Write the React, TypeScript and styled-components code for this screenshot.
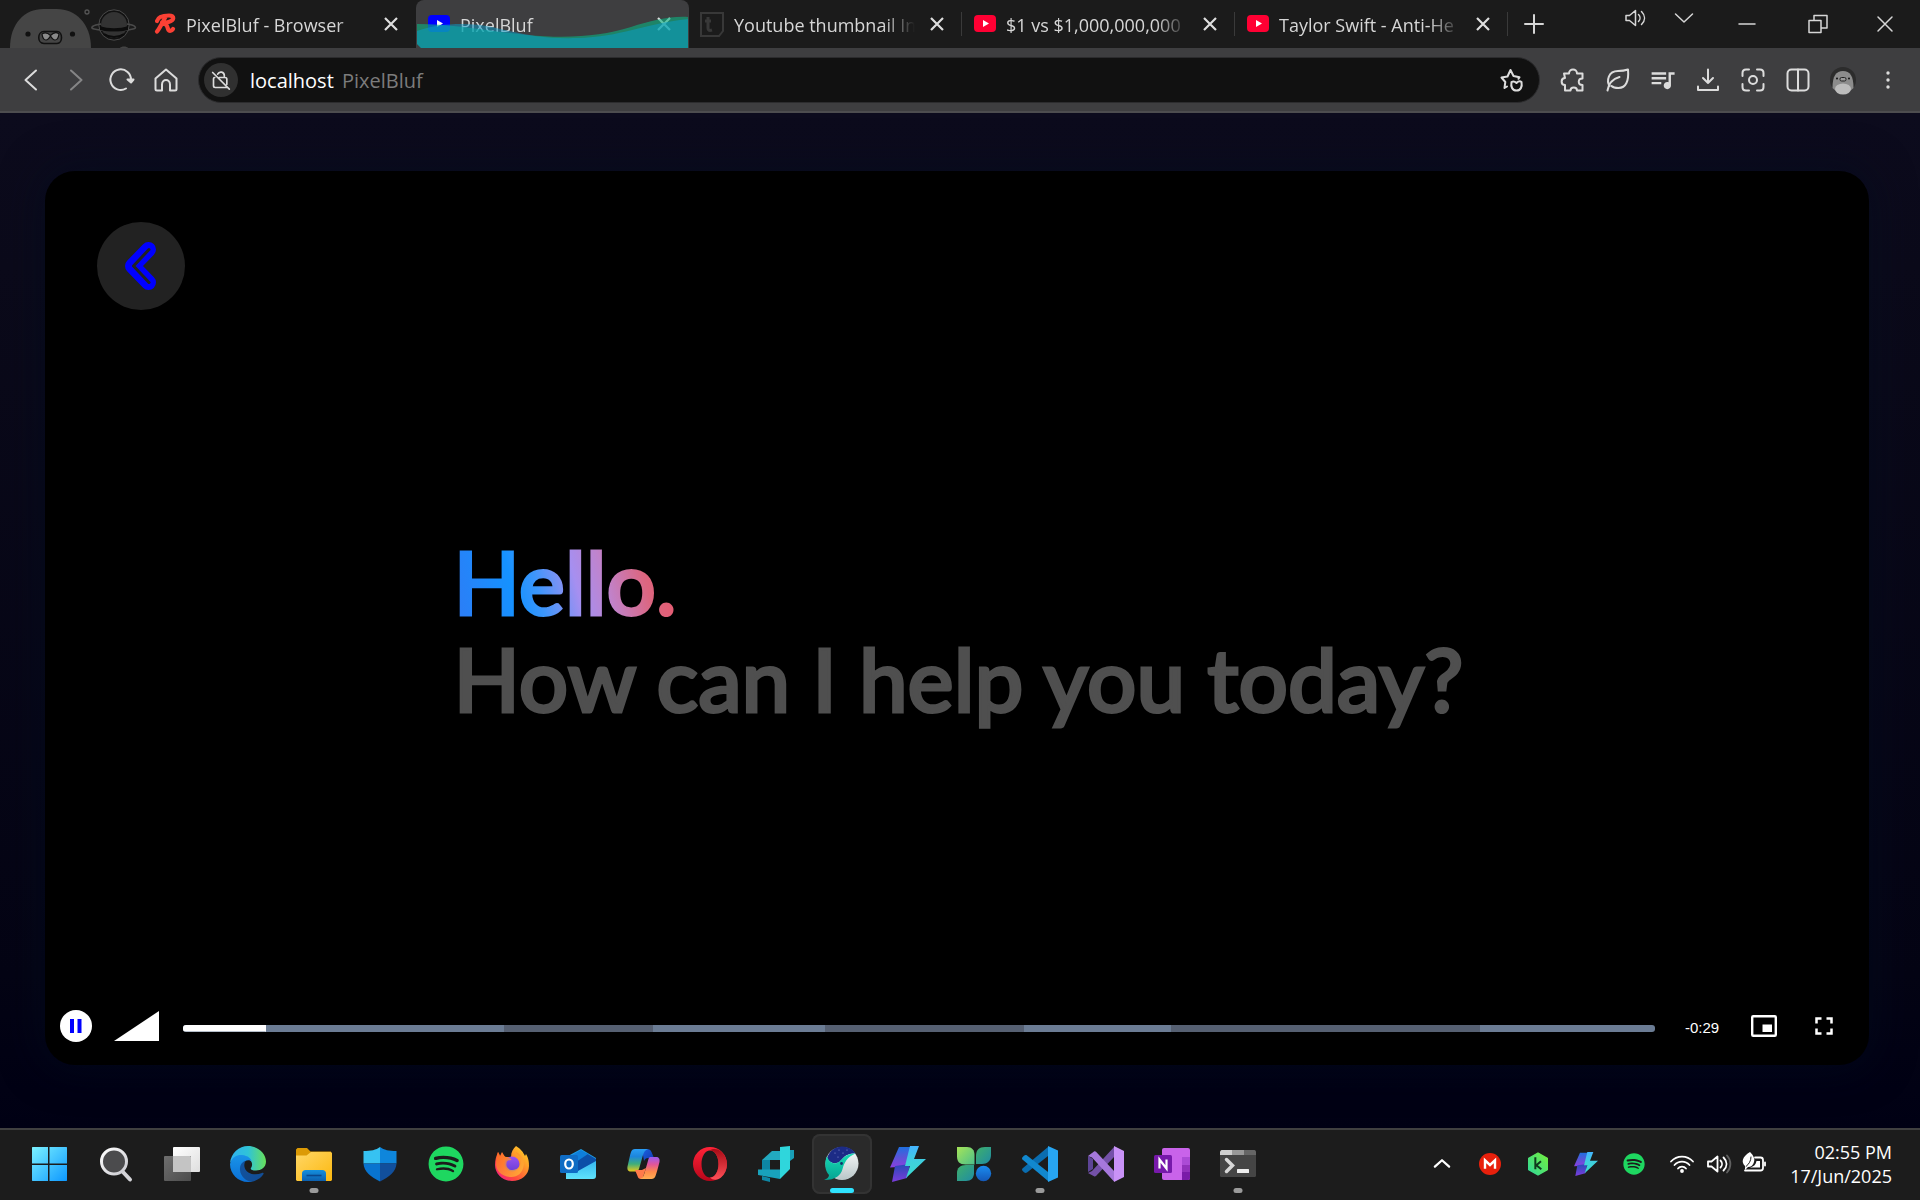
import React from "react";
import styled, { createGlobalStyle, css } from "styled-components";
import { FaSpotify } from "react-icons/fa";
import { MdQueueMusic, MdFullscreen } from "react-icons/md";

const uiFont = `"Open Sans", "Noto Sans", sans-serif`;

const Global = createGlobalStyle`
  * { box-sizing: border-box; }
  body { margin: 0; background: #1b1b1b; font-family: ${uiFont}; }
  button, input { font: inherit; color: inherit; border: 0; padding: 0; margin: 0; background: none; outline: none; }
  button { cursor: pointer; display: flex; align-items: center; justify-content: center; }
  svg { display: block; flex: none; overflow: visible; }
`;

const Desktop = styled.div`
  display: flex;
  flex-direction: column;
  min-height: 100vh;
`;

/* ---------- tab strip ---------- */

const TabStrip = styled.header`
  display: flex;
  align-items: stretch;
  height: 48px;
  background: #1b1b1b;
  color: #d6d6d6;
`;

const Tabs = styled.div`
  display: flex;
  flex: 0 1 1365px;
  min-width: 0;
`;

const Tab = styled.div<{ $active?: boolean; $divider?: boolean }>`
  position: relative;
  flex: 1 1 0;
  min-width: 0;
  display: flex;
  align-items: center;
  gap: 10px;
  padding: 0 13px 0 11px;
  font-size: 18px;
  line-height: 24px;
  ${(p) =>
    p.$active &&
    css`
      background: #3e3e40;
      border-radius: 8px 8px 0 0;
      overflow: hidden;
    `}
  ${(p) =>
    p.$divider &&
    css`
      &::after {
        content: "";
        position: absolute;
        right: 0;
        top: 12px;
        width: 1px;
        height: 24px;
        background: #3a3a3a;
      }
    `}
`;

const TabTitle = styled.span`
  flex: 1;
  min-width: 0;
  padding-top: 2px;
  white-space: nowrap;
  overflow: hidden;
  mask-image: linear-gradient(to right, #000 calc(100% - 32px), transparent);
`;

const CloseTab = styled.button`
  width: 24px;
  height: 24px;
`;

const Wave = styled.svg`
  position: absolute;
  inset: 0;
  width: 100%;
  height: 100%;
  pointer-events: none;
`;

const NewTab = styled.button`
  width: 52px;
`;

const WindowControls = styled.div`
  display: flex;
  margin-left: auto;
`;

const WindowButton = styled.button<{ $w: number; $short?: boolean }>`
  width: ${(p) => p.$w}px;
  height: ${(p) => (p.$short ? 36 : 48)}px;
`;

/* ---------- toolbar ---------- */

const Toolbar = styled.nav`
  display: flex;
  align-items: center;
  height: 65px;
  padding: 0 10px 0 8px;
  background: #3e3e40;
  border-bottom: 2px solid #4d4d4f;
  color: #dcdcdc;
`;

const ToolButton = styled.button<{ $dim?: boolean }>`
  width: 45px;
  height: 45px;
  opacity: ${(p) => (p.$dim ? 0.45 : 1)};
`;

const AddressBar = styled.form`
  display: flex;
  align-items: center;
  flex: 1;
  min-width: 0;
  height: 46px;
  margin: 0 10px;
  padding: 0 15px 0 5px;
  border: 1px solid #2c2c2e;
  border-radius: 23px;
  background: #111;
  font-size: 20px;
`;

const SiteInfo = styled.button`
  width: 34px;
  height: 34px;
  margin-right: 12px;
  border-radius: 50%;
  background: #303030;
`;

const UrlInput = styled.input`
  width: 92px;
  height: 40px;
  padding-top: 2px;
  color: #fff;
`;

const PageTitle = styled.span`
  flex: 1;
  padding-top: 2px;
  color: #7c7c7c;
`;

/* ---------- page ---------- */

const Page = styled.main`
  display: flex;
  flex: 1;
  padding: 58px 51px 63px 45px;
  background: linear-gradient(#0c0b1d, #0b0a1a 15%, #040414 85%, #000014);
`;

const Player = styled.section`
  display: flex;
  flex-direction: column;
  flex: 1;
  min-width: 0;
  padding: 51px 32px 19px 15px;
  border-radius: 30px;
  background: #000;
  box-shadow: 0 0 40px 4px rgba(0, 12, 32, 0.5);
`;

const BackButton = styled.button`
  width: 88px;
  height: 88px;
  margin-left: 37px;
  border-radius: 50%;
  background: #222;
`;

const Frame = styled.div`
  flex: 1;
  display: flex;
  align-items: center;
  justify-content: center;
  padding: 0 0 56px 20px;
`;

const Greeting = styled.h1`
  margin: 0;
  font: 500 87px/97px Lato, "Open Sans", sans-serif;
  color: #4f4f4f;
  -webkit-text-stroke: 3px #4f4f4f;
`;

const Hello = styled.span`
  display: table;
  background: linear-gradient(75deg, #2f7bf5 0%, #1592ff 28%, #3c96fb 38%, #a68ff0 54%, #c083cc 66%, #dc6680 82%, #ee5366 100%);
  background-clip: text;
  color: transparent;
  -webkit-text-stroke-color: transparent;
`;

const Controls = styled.div`
  display: flex;
  align-items: center;
  height: 40px;
  color: #fff;
`;

const PauseButton = styled.button`
  width: 32px;
  height: 32px;
  border-radius: 50%;
  background: #fff;
`;

const Volume = styled.input`
  appearance: none;
  width: 45px;
  height: 30px;
  margin: 0 24px 0 22px;
  background: #fff;
  clip-path: polygon(0 100%, 100% 0, 100% 100%);
  &::-webkit-slider-thumb {
    appearance: none;
    width: 0;
  }
`;

const Seek = styled.input`
  appearance: none;
  flex: 1;
  min-width: 0;
  height: 7px;
  margin-top: 4px;
  border-radius: 3px;
  background: linear-gradient(
    to right,
    #6b7c94 0 21.8%,
    #566072 21.8% 31.9%,
    #6b7c94 31.9% 43.6%,
    #566072 43.6% 57.1%,
    #6b7c94 57.1% 67.1%,
    #566072 67.1% 88.1%,
    #6b7c94 88.1%
  );
  overflow: hidden;
  &::-webkit-slider-thumb {
    appearance: none;
    width: 1px;
    height: 7px;
    border-radius: 0 3px 3px 0;
    background: #fff;
    box-shadow: -500px 0 0 500px #fff;
    clip-path: inset(0 0 0 -1000px);
  }
`;

const Remaining = styled.time`
  width: 34px;
  margin: 4px 32px 0 30px;
  font: 15px/18px "Liberation Sans", Arial, sans-serif;
`;

const PlayerButton = styled.button`
  width: 26px;
  height: 30px;
  & + & {
    margin-left: 34px;
  }
`;

/* ---------- taskbar ---------- */

const Taskbar = styled.footer`
  display: flex;
  align-items: center;
  justify-content: space-between;
  height: 72px;
  padding: 0 28px 2px 17px;
  border-top: 2px solid #404040;
  background: #1c1c1c;
  color: #fff;
`;

const Apps = styled.div`
  display: flex;
`;

const AppButton = styled.button<{ $state?: "open" | "active" }>`
  position: relative;
  width: 60px;
  height: 60px;
  margin: 0 3px;
  border-radius: 8px;
  ${(p) =>
    p.$state === "active" &&
    css`
      background: #2a2a2a;
      box-shadow: inset 0 0 0 2px #333;
    `}
  ${(p) =>
    p.$state &&
    css`
      &::after {
        content: "";
        position: absolute;
        bottom: 1px;
        left: 50%;
        width: ${p.$state === "active" ? 24 : 9}px;
        height: 5px;
        border-radius: 3px;
        background: ${p.$state === "active" ? "#2fe3ff" : "#9a9a9a"};
        transform: translateX(-50%);
      }
    `}
`;

const Tray = styled.div`
  display: flex;
  align-items: center;
`;

const TrayButton = styled.button<{ $w?: number }>`
  width: ${(p) => p.$w ?? 48}px;
  height: 48px;
`;

const Clock = styled.time`
  margin-left: 12px;
  font-size: 18px;
  line-height: 24px;
  text-align: right;
`;

/* ---------- drawings ---------- */

const Grad = ({ id, c, v, r }: { id: string; c: string[]; v?: boolean; r?: boolean }) => (
  <linearGradient id={id} x1={r ? 1 : 0} y1="0" x2={v || r ? 0 : 1} y2="1">
    {c.map((color, i) => (
      <stop key={i} offset={i / (c.length - 1)} stopColor={color} />
    ))}
  </linearGradient>
);

const Art = ({ children, size = 36 }: { children: React.ReactNode; size?: number }) => (
  <svg width={size} height={size} viewBox="0 0 36 36" aria-hidden="true">
    {children}
  </svg>
);

const Line = ({ d, size = 24, w = 2, children }: { d?: string; size?: number; w?: number; children?: React.ReactNode }) => (
  <svg width={size} height={size} viewBox="0 0 24 24" fill="none" stroke="currentColor" strokeWidth={w} strokeLinecap="round" strokeLinejoin="round" aria-hidden="true">
    {d && <path d={d} />}
    {children}
  </svg>
);

const Mascots = () => (
  <svg width="143" height="48" viewBox="0 0 143 48" aria-hidden="true">
    <path d="M10 48C10 23 25 9 43 9h14c18 0 34 14 34 39z" fill="#454545" />
    <circle cx="28" cy="34" r="2.6" fill="#111" />
    <circle cx="72.5" cy="34" r="2.6" fill="#111" />
    <path d="M44 31.500h13c6 0 6 12 0 12H44c-7 0-7-12 0-12z" fill="#454545" stroke="#111" strokeWidth="1.6" />
    <path d="M42 34c3-2 6-1 8.500 1.500 2.500-2.500 6-3.500 8.500-1.500-.5 4-2 6-4 6s-3-1.500-4.500-4C49 38.500 48 40 46 40s-3.500-2-4-6z" fill="#8a8a8a" stroke="#111" strokeWidth="1.2" />
    <circle cx="114" cy="25" r="14" fill="#333" stroke="#111" strokeWidth="2" />
    <circle cx="114" cy="25" r="15.2" fill="none" stroke="#4a4a4a" />
    <path d="M101 24c-8 1-12 4-7 5 10 2 30 2 39 0 5-1 2-4-6-5" fill="none" stroke="#4a4a4a" strokeWidth="1.6" />
    <path d="M100 26c8 3 20 3 28 0v4c-8 2-20 2-28 0z" fill="#0c0c0c" />
    <path d="M104 34c6 4 14 4 20 0" fill="none" stroke="#0c0c0c" strokeWidth="2" />
    <circle cx="87" cy="12" r="2" fill="none" stroke="#555" strokeWidth="1.3" />
    <path d="M120 48c1-2 7-2 8 0z" fill="#444" />
  </svg>
);

const Cross = () => (
  <svg width="14" height="14" viewBox="0 0 14 14" stroke="#dedede" strokeWidth="2.2" aria-hidden="true">
    <path d="M1 1l12 12M13 1L1 13" />
  </svg>
);

const RMark = () => (
  <svg width="22" height="22" viewBox="0 0 22 22" fill="none" stroke="#fb4034" strokeWidth="4.2" strokeLinecap="round" strokeLinejoin="round" aria-hidden="true">
    <path d="M3 8C4 4 9 2.500 15 2.500c6 0 5.500 5-.5 6.500-2 .6-5 .8-6.500.5M11.500 4C8.500 9 6.500 14 3 18.500M10 11c4 0 3 4 4.500 6 1 1.500 3 1 4.500-1" />
  </svg>
);

const PlayBadge = ({ color }: { color: string }) => (
  <svg width="23" height="18" viewBox="0 0 23 18" aria-hidden="true">
    <rect x="1" y="0" width="22" height="17" rx="4" fill={color} />
    <path d="M10 5l6 3.500-6 3.500z" fill="#fff" />
  </svg>
);

const TMark = () => (
  <svg width="24" height="25" viewBox="0 0 24 25" fill="none" stroke="#383838" strokeWidth="2" aria-hidden="true">
    <path d="M1 1h22v18l-4 5H1z" />
    <path d="M8 5v11c0 2 1 3 4 2M5 9h6" strokeWidth="3" />
  </svg>
);

const Speaker = ({ size = 24, tray }: { size?: number; tray?: boolean }) => (
  <Line size={size} w={tray ? 1.8 : 1.5}>
    <path d="M2 9.500h3.500L11.500 4.500v15l-6-5H2z" />
    <path d="M14.500 8.500c2 2 2 5 0 7M17.500 5.500c4 4 4 9 0 13" />
    {tray && <path d="M21 3.500c4.500 5 4.500 12 0 17" opacity=".3" />}
  </Line>
);

const Bolt = ({ id, size = 36 }: { id: string; size?: number }) => (
  <Art size={size}>
    <defs>
      <Grad id={id + "a"} c={["#1f6fe0", "#5a55d8", "#8a3fe0"]} v />
      <Grad id={id + "b"} c={["#45b4ff", "#3fd0dc", "#3adbd0"]} v />
      <Grad id={id + "c"} c={["#2848b8", "#7b3ddc"]} v />
    </defs>
    <path d="M9 1h13l-7 19.500-15 1z" fill={`url(#${id}a)`} />
    <path d="M5 20l15-2-3 14-15 4z" fill={`url(#${id}c)`} />
    <path d="M20 0h9l-5 13h12L16 32l4-12h-5z" fill={`url(#${id}b)`} />
  </Art>
);

const Start = () => (
  <Art>
    <defs>
      <linearGradient id="win" x1="0" y1="0" x2="36" y2="36" gradientUnits="userSpaceOnUse">
        <stop offset="0" stopColor="#7df3ff" />
        <stop offset="1" stopColor="#0a95ff" />
      </linearGradient>
    </defs>
    <path d="M.5 1H16v16.500H0V1.500zM17.500 1h17l.5.5v16H17.500zM0 19h16v16H.5L0 34.500zM17.500 19H35v15.500l-.5.5h-17z" fill="url(#win)" />
  </Art>
);

const Search = () => (
  <Art>
    <defs>
      <Grad id="sr" c={["#fff", "#c9c9cf"]} />
    </defs>
    <path d="M24.500 25.500l7.500 8" stroke="#d4d4d8" strokeWidth="4" strokeLinecap="round" />
    <circle cx="16" cy="15.5" r="12.5" fill="#4b4b4d" stroke="url(#sr)" strokeWidth="3" />
  </Art>
);

const TaskView = () => (
  <Art>
    <defs>
      <Grad id="tv1" c={["#fff", "#dedede"]} />
      <Grad id="tv2" c={["#6e6e6e", "#4c4c4c"]} />
    </defs>
    <rect x="9" y="1" width="27" height="25" rx="1" fill="url(#tv1)" />
    <rect x="0" y="10" width="27" height="25" rx="1" fill="url(#tv2)" />
    <path d="M9 10h17l1 1v15H9z" fill="#c4c4c4" />
  </Art>
);

const Edge = () => (
  <Art>
    <defs>
      <linearGradient id="ed1">
        <stop offset="0" stopColor="#2fb2f0" />
        <stop offset=".5" stopColor="#2fc3d8" />
        <stop offset="1" stopColor="#68e05a" />
      </linearGradient>
      <Grad id="ed2" c={["#1a94e8", "#0a6fd6"]} v />
      <Grad id="ed3" c={["#12539f", "#124c94"]} />
    </defs>
    <path d="M0 17C1 7 9 0 18 0s18 7 18 15.500c0 6-5 9-10 9-4 0-6-1-5-2.500 2-3 1-6-1-8-4-5-14-6-20 3z" fill="url(#ed1)" />
    <path d="M0 18C2 10 8 8.500 12 9c6 .5 9.500 4 9.500 6.500C19 13 14 14 12.500 19c-2 7 3.500 15 11.500 15.500-2 1-4 1.500-6 1.500C8 36 0 28 0 18z" fill="url(#ed2)" />
    <path d="M15.500 14.500c-4 2-6 5-5.500 9.500C10.500 31 17 36 23 35.500c5-1.500 8.500-4 10.500-7.500.5-1-.5-1.500-1.500-1-7 3-16 1-17.500-6-.5-2.500 0-4.500 1-6.500z" fill="url(#ed3)" />
  </Art>
);

const Folder = () => (
  <Art>
    <defs>
      <Grad id="fo" c={["#ffd766", "#fcb80f"]} />
      <Grad id="fb" c={["#1490df", "#0c5fae"]} v />
    </defs>
    <path d="M1.500 2H11l3.500 3.500H35V20H0V3.500z" fill="#dc9a05" />
    <path d="M0 9.500h10.500L15 6h20l1 1v27l-1 1H1l-1-1z" fill="url(#fo)" />
    <path d="M6 35v-7.500c0-2 1.500-3.500 3.500-3.500h17c2 0 3.500 1.500 3.500 3.500V35z" fill="url(#fb)" />
    <path d="M10.500 29.500h15" stroke="#0a478c" strokeWidth="1.6" />
  </Art>
);

const Shield = () => (
  <Art>
    <path d="M18 1C14 4 9 5 1.500 5v12.500H18z" fill="#36c2f2" />
    <path d="M18 1c4 3 9 4 16.500 4v12.500H18z" fill="#0e86dc" />
    <path d="M1.500 17.500C2 26 9 31 18 35.500v-18z" fill="#0874cf" />
    <path d="M34.500 17.500C34 26 27 31 18 35.500v-18z" fill="#114f9c" />
  </Art>
);

const Firefox = () => (
  <Art>
    <defs>
      <Grad id="ff1" r c={["#ffe226", "#ff9a2a", "#ff4a3c", "#f0129a"]} />
      <Grad id="ff2" c={["#9a52f0", "#6a3fd6"]} v />
      <Grad id="ff3" c={["#ff6a22", "#ffc23a"]} />
    </defs>
    <path d="M22 0c5 3 7 6 9 10l1-2c3 5 3 9 3 12 0 9-8 15-17 15S1 28 1 19c0-5 1-8 3-13l2 4 2-4 3 5h6c0-5 2-8 5-11z" fill="url(#ff1)" />
    <circle cx="18" cy="18" r="7.5" fill="url(#ff2)" />
    <path d="M4 6c1 1 2 3 2 5l2-4c1 2 3 4 5 4 2 .5 4 1.500 4.500 3-3 0-5 1-5 3-1 4 2 7 6 7 5 0 9-4 8-10-1-4-4-6-5-8 6 2 9 8 8 14-1 7-6 11-12 11C8 31 2 25 2 18 2 13 3 9 4 6z" fill="url(#ff3)" opacity=".75" />
  </Art>
);

const Outlook = () => (
  <Art>
    <defs>
      <Grad id="ol" c={["#36b8f0", "#5fe2fb"]} v />
    </defs>
    <path d="M6 11L21 3l15 9v16H6z" fill="#1f9fe6" />
    <path d="M14 14l12-7 10 6v4L17 27z" fill="#0c4fa8" />
    <path d="M12 9l9-5 7 4-12 8z" fill="#0f7fdb" />
    <path d="M6 33V24l12 1 18-10v15c0 2-1 3-3 3z" fill="url(#ol)" />
    <rect x="0" y="9" width="18" height="18" rx="1.5" fill="#0f6cc4" />
    <ellipse cx="9" cy="18" rx="3.8" ry="4.5" fill="none" stroke="#fff" strokeWidth="2.2" />
  </Art>
);

const Copilot = () => (
  <Art>
    <defs>
      <Grad id="cp1" v c={["#2a9df4", "#1c86dc", "#3fae7a", "#e8c81c"]} />
      <Grad id="cp2" v c={["#9a5cf0", "#e0559a", "#ff8a4a", "#ffae52"]} />
      <Grad id="cp3" c={["#1a62e0", "#1238b0"]} />
    </defs>
    <path d="M16 3h5c2 0 4 1 4.500 3L28 12h-6c-2 0-3 1-4 3z" fill="url(#cp3)" />
    <path d="M9 3h13c-3 1-4 3-5 6l-4 14c-1 2-2 2.500-4 2.500H5c-3 0-4-2-3.500-5C3 14 4 9 5 6c.7-2 2-3 4-3z" fill="url(#cp1)" />
    <path d="M9 24h7l4-2-3 9c-.5 1.500-1 2-2 2-2 0-3-1-3.500-3z" fill="#ff7a4a" />
    <path d="M25 11h5c3 0 4 2 3.500 5-1.500 6-3 11-4 14-.7 2-2 3-4 3H14c3-1 3.500-3 4.500-6l4-14c.5-1.500 1-2 2.500-2z" fill="url(#cp2)" />
  </Art>
);

const Opera = () => (
  <Art>
    <defs>
      <Grad id="op1" v c={["#ff2338", "#b8061a"]} />
      <Grad id="op2" v c={["#a80c16", "#ff5058"]} />
    </defs>
    <path fillRule="evenodd" d="M18 1a17 17 0 100 34 17 17 0 000-34zm0 3.500c5 0 8.500 6 8.500 13.500S23 31.500 18 31.500 9.500 25.500 9.500 18 13 4.500 18 4.500z" fill="url(#op1)" />
    <path d="M18 4.500c3-2 7-2 11 1 8 7 8 19 0 26-4 3-8 3-11 0 5 0 8.500-6 8.500-13.500S23 4.500 18 4.500z" fill="url(#op2)" />
  </Art>
);

const DevEditor = () => (
  <Art>
    <path d="M4 30l8 2v4l-8-2z" fill="#0e87a5" />
    <path d="M4 14h8v10H4z" fill="#0d86a4" />
    <path d="M4 14l10-9h8v9z" fill="#22a9bf" />
    <path d="M0 23.500h22V33L0 29z" fill="#18a2bc" />
    <path d="M22 1l10-1v23L22 33z" fill="#2fd6dc" />
    <path d="M32 4h4v8l-4 3z" fill="#199fb8" />
  </Art>
);

const Whale = () => (
  <Art>
    <defs>
      <Grad id="wh" v c={["#fff", "#b9c6c8"]} />
      <Grad id="wt" v c={["#18dcb4", "#04a393"]} />
    </defs>
    <circle cx="18" cy="17.5" r="16.5" fill="url(#wh)" />
    <path d="M3 12C6 4 12 .5 18 .5c6 0 11 3 13.500 7-9-1-13 5-16 8.500C12 18 6 18 3 12z" fill="#1c2b86" />
    <path d="M3 10c2 8 9 9 13 5 4-4 8-8 15.500-7.500C23 11 20 17 18.500 23 17 29 12 34 0 34c3-1 5-3 5-5C1 25 0 17 3 10z" fill="url(#wt)" />
    <circle cx="17.5" cy="17.500" r="1.400" fill="#14306a" />
    <g fill="#8d97d8">
      <circle cx="11" cy="7" r=".6" />
      <circle cx="15" cy="4" r=".6" />
      <circle cx="19" cy="7" r=".6" />
      <circle cx="14" cy="11" r=".6" />
      <circle cx="23" cy="4" r=".6" />
    </g>
  </Art>
);

const Clover = () => (
  <Art>
    <defs>
      <Grad id="cl1" c={["#a6e458", "#4cc08a"]} />
      <Grad id="cl2" c={["#3fb06a", "#1f8ca4"]} />
      <Grad id="cl3" c={["#1a8cf0", "#1458b8"]} v />
    </defs>
    <path d="M35 1v8c0 6-4 9-9 9h-6V10c0-6 3-9 9-9z" fill="url(#cl2)" />
    <path d="M1 35v-8c0-5 3-8 9-8h8v8c0 5-3 8-8 8z" fill="url(#cl2)" />
    <path d="M1 1h10c5 0 7.500 3 7.500 8v9.500h-9c-6 0-8.500-3-8.500-8z" fill="url(#cl1)" />
    <circle cx="27.5" cy="27.5" r="7.7" fill="url(#cl3)" />
  </Art>
);

const Code = () => (
  <Art>
    <path d="M26 1v9L5 26.500c-1 .7-2 .6-3-.2l-1.300-1.300c-.9-1-.9-2 0-2.800z" fill="#0a6db0" />
    <path d="M26 35v-9L5 9.500c-1-.7-2-.6-3 .2L.7 11c-.9 1-.9 2 0 2.800z" fill="#1188cf" />
    <path d="M26 0l10 4.500v27L26 36z" fill="#27a5f2" />
  </Art>
);

const VisualStudio = () => (
  <Art>
    <path d="M0 10l5 3v10l-5 3z" fill="#5d4496" />
    <path d="M26 1v10L8 30c-.7.5-1.200.5-2 .2L0 27l4-2z" fill="#7451a8" />
    <path d="M0 10l6-4.500c.8-.5 1.500-.3 2 .2L26 25v10.500L4 11.500z" fill="#a678dc" />
    <path d="M26 0l10 5v26l-10 5z" fill="#c992f7" />
  </Art>
);

const OneNote = () => (
  <Art>
    <rect x="8" y="2" width="28" height="32" rx="2" fill="#c963ea" />
    <path d="M28 11h8v8h-8z" fill="#ac4bd6" />
    <path d="M28 19h8v7h-8z" fill="#9231bb" />
    <path d="M28 26h8v6c0 1-1 2-2 2h-6z" fill="#7a1ba8" />
    <rect x="0" y="9" width="18" height="18" rx="1.5" fill="#7719aa" />
    <path d="M5.500 22.500v-9l7 9v-9" fill="none" stroke="#fff" strokeWidth="2.2" />
  </Art>
);

const Terminal = () => (
  <Art>
    <rect x="0" y="4" width="36" height="27" rx="1.5" fill="#454545" />
    <path d="M1.500 4H12v5H0V5.500z" fill="#cfcfcf" />
    <path d="M12 4h12v5H12z" fill="#999" />
    <path d="M24 4h10.500L36 5.500V9H24z" fill="#666" />
    <path d="M6.500 13.500l6 6-6 6" fill="none" stroke="#d8d8d8" strokeWidth="3.5" strokeLinecap="round" />
    <rect x="17" y="23" width="12" height="4" rx=".5" fill="#ededed" />
  </Art>
);

const Mega = () => (
  <Art size={24}>
    <circle cx="18" cy="18" r="16.5" fill="#e8200c" />
    <path d="M10.500 25V12.500l7.500 7 7.500-7V25" fill="none" stroke="#fff" strokeWidth="3.6" />
  </Art>
);

const Kite = () => (
  <Art size={24}>
    <defs>
      <Grad id="kk" r c={["#74f03c", "#2fd79a"]} />
    </defs>
    <path d="M18 1.500l14 8v17l-14 8-14-8v-17z" fill="url(#kk)" stroke="url(#kk)" strokeWidth="2" strokeLinejoin="round" />
    <path d="M14 8v18M22.500 14L15.500 20l7.500 6" fill="none" stroke="#0f3a1c" strokeWidth="3" />
  </Art>
);

const Wifi = () => (
  <Line d="M1 9.500c6-6.500 16-6.500 22 0M4.500 13c4-4.500 11-4.500 15 0M8 16.500c2-2.500 6-2.500 8 0" w={1.8}>
    <circle cx="12" cy="19" r="1" fill="currentColor" />
  </Line>
);

const Battery = () => (
  <Line w={1.8}>
    <path d="M13 5.500h5.500c1.500 0 2.500 1 2.500 2.500v8c0 1.500-1 2.500-2.500 2.500H3M23 10.500v3" />
    <path d="M8 0c4 4 5 7 4 10-.7 3-3 5-6 5l-3 3v-4C-1 10 0 5 8 0z" fill="currentColor" stroke="none" />
    <path d="M14.500 9h3.500v6.500H8c4-1 6-3 6.500-6.500z" fill="currentColor" stroke="none" />
    <path d="M9 5c0 4-2 7-5 9.500" stroke="#1c1c1c" strokeWidth="1" />
  </Line>
);

/* ---------- data ---------- */

const tabs = [
  { title: "PixelBluf - Browser", icon: <RMark /> },
  { title: "PixelBluf", icon: <PlayBadge color="#0000ff" />, active: true },
  { title: "Youtube thumbnail In", icon: <TMark />, divider: true },
  { title: "$1 vs $1,000,000,000", icon: <PlayBadge color="#ff0033" />, divider: true },
  { title: "Taylor Swift - Anti-He", icon: <PlayBadge color="#ff0033" />, divider: true },
];

const apps: { name: string; icon: React.ReactNode; state?: "open" | "active" }[] = [
  { name: "Start", icon: <Start /> },
  { name: "Search", icon: <Search /> },
  { name: "Task view", icon: <TaskView /> },
  { name: "Edge", icon: <Edge /> },
  { name: "File Explorer", icon: <Folder />, state: "open" },
  { name: "Windows Security", icon: <Shield /> },
  { name: "Spotify", icon: <FaSpotify size={36} color="#1ed760" /> },
  { name: "Firefox", icon: <Firefox /> },
  { name: "Outlook", icon: <Outlook /> },
  { name: "Copilot", icon: <Copilot /> },
  { name: "Opera", icon: <Opera /> },
  { name: "Dev editor", icon: <DevEditor /> },
  { name: "Whale", icon: <Whale />, state: "active" },
  { name: "Bolt", icon: <Bolt id="bt" /> },
  { name: "Clover", icon: <Clover /> },
  { name: "Visual Studio Code", icon: <Code />, state: "open" },
  { name: "Visual Studio", icon: <VisualStudio /> },
  { name: "OneNote", icon: <OneNote /> },
  { name: "Terminal", icon: <Terminal />, state: "open" },
];

export default function App() {
  return (
    <Desktop>
      <Global />
      <TabStrip>
        <Mascots />
        <Tabs role="tablist">
          {tabs.map((t) => (
            <Tab key={t.title} role="tab" aria-selected={!!t.active} $active={t.active} $divider={t.divider}>
              {t.icon}
              <TabTitle>{t.title}</TabTitle>
              <CloseTab aria-label={`Close ${t.title}`}>
                <Cross />
              </CloseTab>
              {t.active && (
                <Wave viewBox="0 0 273 48" preserveAspectRatio="none" aria-hidden="true">
                  <path d="M1 24c35 0 65 6 109 11 45 4 75 1 105-8 20-6 38-11 57-10v31H5L1 44z" fill="rgb(10 180 130 / .6)" />
                  <path d="M1 31c25-9 55-8 75-4 30 7 50 12 85 11 45-1 65-14 111-19v29H5L1 44z" fill="rgb(8 158 206 / .5)" />
                </Wave>
              )}
            </Tab>
          ))}
        </Tabs>
        <NewTab aria-label="New tab">
          <Line d="M12 3v18M3 12h18" w={2} />
        </NewTab>
        <WindowControls>
          <WindowButton $w={48} $short aria-label="Mute tab"><Speaker /></WindowButton>
          <WindowButton $w={48} $short aria-label="Search tabs"><Line d="M3.500 8L12 16l8.500-8" w={1.5} /></WindowButton>
          <WindowButton $w={78} aria-label="Minimize"><Line d="M4 12h16" w={1.5} /></WindowButton>
          <WindowButton $w={64} aria-label="Restore"><Line d="M3 8.500h12v12H3zM8 8V3.500h13V16h-5" w={1.5} /></WindowButton>
          <WindowButton $w={70} aria-label="Close window"><Line d="M5 5l14 14M19 5L5 19" w={1.5} /></WindowButton>
        </WindowControls>
      </TabStrip>

      <Toolbar>
        <ToolButton aria-label="Back"><Line d="M17 2.500L6.500 12 17 21.500" /></ToolButton>
        <ToolButton $dim aria-label="Forward"><Line d="M7 2.500L17.500 12 7 21.500" /></ToolButton>
        <ToolButton aria-label="Reload">
          <Line d="M17 20.500A10.300 10.300 0 1122 12">
            <path d="M18.500 11.500h6L22 14.500z" fill="currentColor" />
          </Line>
        </ToolButton>
        <ToolButton aria-label="Home"><Line d="M1.500 10.500L12 1.500l10.500 9v10.500c0 1-.5 1.500-1.500 1.500h-5v-6c0-6-8-6-8 0v6H3c-1 0-1.500-.5-1.500-1.500z" /></ToolButton>
        <AddressBar>
          <SiteInfo type="button" aria-label="Site information">
            <Line size={20} d="M4.500 9c-1 0-1.500.5-1.500 1.500V19c0 1 1 2 2 2h14M10 9h7c1.500 0 2 .5 2 2v6M8 5c2-4 8-3 8 2v2M2 3l20 20" />
          </SiteInfo>
          <UrlInput aria-label="Address" defaultValue="localhost" />
          <PageTitle>PixelBluf</PageTitle>
          <button type="button" aria-label="Add to favourites">
            <Line d="M7 18.500l-2.500 1.500.8-6L1.500 9.500l6-1L10.500 2l3 6 6 1.300-1 1.500">
              <path d="M11.500 14c2.500-1.500 4 0 5 1 1-1 3-2.500 5-1 1 5-1 8.500-5 8.500s-6-3.500-5-8.500z" />
            </Line>
          </button>
        </AddressBar>
        <ToolButton aria-label="Extensions">
          <Line d="M3 5.500h5c0-5.500 8-5.500 8 0h5.500v5c-5 0-5 6.500 0 6.500v5.500h-5.500c0-4-6.500-4-6.500 0H4V17c-4.500 0-4.500-7 0-7z" />
        </ToolButton>
        <ToolButton aria-label="Energy saver">
          <Line d="M1.500 22.500c1-7 5-11.500 12-13.500M3.500 18C.5 13 2 3 12 3c4 0 7-.5 10-1.500C23 13 20 20 12.500 20c-3 0-5.500-.5-7-2" />
        </ToolButton>
        <ToolButton aria-label="Media queue"><MdQueueMusic size={29} aria-hidden="true" /></ToolButton>
        <ToolButton aria-label="Downloads"><Line d="M12 1.500V15M7 10l5 5 5-5M2 18.500V22h20v-3.500" /></ToolButton>
        <ToolButton aria-label="Capture">
          <Line d="M1.500 8V5c0-2 1.500-3.500 3.500-3.500h3M16 1.500h3c2 0 3.500 1.500 3.500 3.500v3M22.500 16v3c0 2-1.500 3.500-3.500 3.500h-3M8 22.500H5c-2 0-3.500-1.500-3.500-3.500v-3">
            <circle cx="12" cy="12" r="4" />
          </Line>
        </ToolButton>
        <ToolButton aria-label="Split view">
          <Line d="M12 1.500v21"><rect x="1.5" y="1.5" width="21" height="21" rx="4" /></Line>
        </ToolButton>
        <ToolButton aria-label="Profile">
          <svg width="26" height="26" viewBox="0 0 26 26" aria-hidden="true">
            <circle cx="13" cy="13" r="13" fill="#2c2c2c" />
            <path d="M2.500 21C2.500 9 6 4 13 4s10.500 5 10.500 17c-5 6-16 6-21 0z" fill="#8c8c8c" />
            <ellipse cx="13" cy="22" rx="8" ry="5.5" fill="#bdbdbd" />
            <circle cx="7" cy="11.5" r="1" fill="#111" />
            <circle cx="19" cy="11.5" r="1" fill="#111" />
            <rect x="10" y="10.5" width="6" height="3.5" rx="1.5" fill="#999" stroke="#222" />
          </svg>
        </ToolButton>
        <ToolButton aria-label="Menu">
          <svg width="24" height="24" viewBox="0 0 24 24" fill="currentColor" aria-hidden="true">
            <circle cx="12" cy="5" r="1.7" /><circle cx="12" cy="12" r="1.7" /><circle cx="12" cy="19" r="1.7" />
          </svg>
        </ToolButton>
      </Toolbar>

      <Page>
        <Player aria-label="Video player">
          <BackButton aria-label="Go back">
            <svg width="48" height="48" viewBox="0 0 48 48" fill="none" strokeLinecap="round" strokeLinejoin="round" aria-hidden="true">
              <path d="M31.500 7.500L15.500 24l16 16.500" stroke="#0000ff" strokeWidth="15" />
              <path d="M32 7.500L16.500 24 32 40.500" stroke="#222" strokeWidth="3" />
            </svg>
          </BackButton>
          <Frame>
            <Greeting>
              <Hello>Hello.</Hello>
              How can I help you today?
            </Greeting>
          </Frame>
          <Controls>
            <PauseButton aria-label="Pause">
              <svg width="12" height="14" viewBox="0 0 12 14" fill="#0000ff" aria-hidden="true">
                <path d="M0 0h4v14H0zM7.500 0h4v14h-4z" />
              </svg>
            </PauseButton>
            <Volume type="range" aria-label="Volume" defaultValue={100} />
            <Seek type="range" aria-label="Seek" min={0} max={1000} defaultValue={56} />
            <Remaining>-0:29</Remaining>
            <PlayerButton aria-label="Picture in picture">
              <svg width="26" height="22" viewBox="0 0 26 22" aria-hidden="true">
                <rect x="1.2" y="1.2" width="23.6" height="19.6" rx="1" fill="none" stroke="#fff" strokeWidth="2.4" />
                <path d="M11.500 9.500H21v7.500h-9.500z" fill="#fff" />
              </svg>
            </PlayerButton>
            <PlayerButton aria-label="Full screen"><MdFullscreen size={30} aria-hidden="true" /></PlayerButton>
          </Controls>
        </Player>
      </Page>

      <Taskbar>
        <Apps>
          {apps.map((a) => (
            <AppButton key={a.name} aria-label={a.name} $state={a.state}>{a.icon}</AppButton>
          ))}
        </Apps>
        <Tray>
          <TrayButton aria-label="Hidden icons"><Line size={18} d="M2.500 15.500L12 7l9.500 8.500" w={3} /></TrayButton>
          <TrayButton aria-label="Mega"><Mega /></TrayButton>
          <TrayButton aria-label="Kite"><Kite /></TrayButton>
          <TrayButton aria-label="Bolt"><Bolt id="bs" size={24} /></TrayButton>
          <TrayButton aria-label="Spotify"><FaSpotify size={22} color="#1ed760" /></TrayButton>
          <TrayButton aria-label="Network"><Wifi /></TrayButton>
          <TrayButton $w={24} aria-label="Sound"><Speaker tray /></TrayButton>
          <TrayButton aria-label="Battery"><Battery /></TrayButton>
          <Clock>
            02:55 PM
            <br />
            17/Jun/2025
          </Clock>
        </Tray>
      </Taskbar>
    </Desktop>
  );
}
